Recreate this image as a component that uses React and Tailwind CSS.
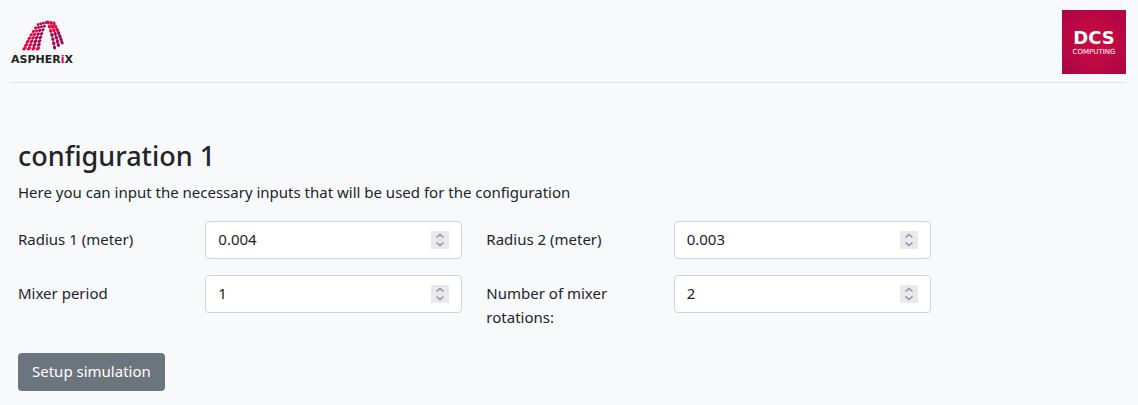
import React from "react";

const lerp = (a, b, t) => a + (b - a) * t;

function mesh(rows, cols, place) {
  const dots = [];
  for (let r = 0; r < rows; r++) {
    for (let c = 0; c < cols; c++) dots.push(place(r / (rows - 1), c / (cols - 1)));
  }
  return dots;
}

const leftLeg = mesh(8, 4, (t, s) => {
  const bend = Math.sin(t * Math.PI) * 1;
  return {
    x: lerp(lerp(14.5, 28, s), lerp(28, 36, s), t) - bend,
    y: lerp(38.5, lerp(14.5, 12.5, s), t),
    rx: lerp(2.5, 1.4, t),
    ry: lerp(1.5, 1.4, t),
    angle: -40,
    fill: s + (1 - t) * 0.2 > 0.6 && t > 0.12 ? "#a0084f" : t > 0.75 ? "#b80a4c" : "#e5063f",
  };
});

const rightLeg = mesh(7, 3, (t, s) => ({
  x: lerp(lerp(38, 44, s), lerp(44.5, 52, s), t) + Math.sin(t * Math.PI) * 0.6,
  y: lerp(lerp(12.5, 13.5, s), lerp(37.5, 32.5, s), t),
  rx: 1.6,
  ry: 2,
  angle: -20,
  fill: t < 0.45 ? "#e5063f" : "#a0084f",
}));

function AspherixLogo() {
  return (
    <svg width="64" height="64" viewBox="0 0 64 64" role="img" aria-label="Aspherix" className="overflow-visible">
      {[...leftLeg, ...rightLeg].map((d, i) => (
        <ellipse key={i} cx={d.x} cy={d.y} rx={d.rx} ry={d.ry} fill={d.fill} transform={`rotate(${d.angle} ${d.x} ${d.y})`} />
      ))}
      <text x="32" y="53" textAnchor="middle" fontSize="11" fontWeight="bold" fill="#222" fontFamily="DejaVu Sans, sans-serif">
        ASPHER<tspan fill="#d5063f">i</tspan>X
      </text>
    </svg>
  );
}

function DcsLogo() {
  return (
    <svg width="64" height="64" viewBox="0 0 64 64" role="img" aria-label="DCS Computing">
      <defs>
        <radialGradient id="dcs" cx="50%" cy="50%" r="70%">
          <stop offset="0" stopColor="#cf0c40" />
          <stop offset="1" stopColor="#aa0545" />
        </radialGradient>
      </defs>
      <rect width="64" height="64" fill="url(#dcs)" />
      <g fill="#fff" textAnchor="middle" fontFamily="DejaVu Sans, sans-serif">
        <text x="32" y="34" fontSize="18" fontWeight="bold">DCS</text>
        <text x="32" y="44" fontSize="7">COMPUTING</text>
      </g>
    </svg>
  );
}

function NumberField({ id, label, value, step }) {
  const ref = React.useRef(null);
  const arrow = "flex h-[9px] w-[18px] justify-center text-[#8f8f9d]";
  return (
    <>
      <label htmlFor={id} className="col-span-2 pt-[6px] pb-2">{label}</label>
      <div className="col-span-3 flex h-[38px] items-center self-start rounded border border-[#ced4da] bg-white px-3">
        <input
          ref={ref}
          id={id}
          type="number"
          step={step}
          defaultValue={value}
          className="h-6 w-full min-w-0 flex-1 bg-transparent pb-0.5 outline-none [appearance:textfield] [&::-webkit-inner-spin-button]:appearance-none"
        />
        <div className="flex flex-col bg-[#e9e9ed]">
          <button type="button" aria-label={`Increase ${label}`} className={arrow + " items-end"} onClick={() => ref.current.stepUp()}>
            <svg width="10" height="7" viewBox="0 0 10 7" fill="none" stroke="currentColor" strokeWidth="1.5"><path d="M1.5 4.5 5 1.5 8.5 4.5" /></svg>
          </button>
          <button type="button" aria-label={`Decrease ${label}`} className={arrow + " items-start"} onClick={() => ref.current.stepDown()}>
            <svg width="10" height="7" viewBox="0 0 10 7" fill="none" stroke="currentColor" strokeWidth="1.5"><path d="M1.5 2.5 5 5.5 8.5 2.5" /></svg>
          </button>
        </div>
      </div>
    </>
  );
}

export default function App() {
  return (
    <div className="min-h-screen bg-[#f8f9fb] font-['Noto_Sans',sans-serif] text-[15px] leading-6 text-[#212529]">
      <div className="pt-[10px] pr-3 pl-[10px]">
        <header className="flex items-start justify-between border-b border-[#dee2e6] pb-2">
          <AspherixLogo />
          <DcsLogo />
        </header>
      </div>
      <main className="pt-14 pr-5 pb-3 pl-[18px]">
        <h1 className="mb-[7px] text-[27px] leading-[34px] font-medium">configuration 1</h1>
        <p className="mb-[17px]">Here you can input the necessary inputs that will be used for the configuration</p>
        <form onSubmit={(e) => e.preventDefault()}>
          <div className="grid grid-cols-12 gap-x-6 gap-y-4">
            <div className="col-span-12 grid grid-cols-subgrid">
              <NumberField id="radius1" label="Radius 1 (meter)" value="0.004" step="0.001" />
              <NumberField id="radius2" label="Radius 2 (meter)" value="0.003" step="0.001" />
            </div>
            <div className="col-span-12 grid grid-cols-subgrid">
              <NumberField id="period" label="Mixer period" value="1" step="1" />
              <NumberField id="rotations" label="Number of mixer rotations:" value="2" step="1" />
            </div>
          </div>
          <button type="submit" className="mt-4 h-[38px] rounded bg-[#6c757d] px-[14px] pb-0.5 text-white">Setup simulation</button>
        </form>
      </main>
    </div>
  );
}
